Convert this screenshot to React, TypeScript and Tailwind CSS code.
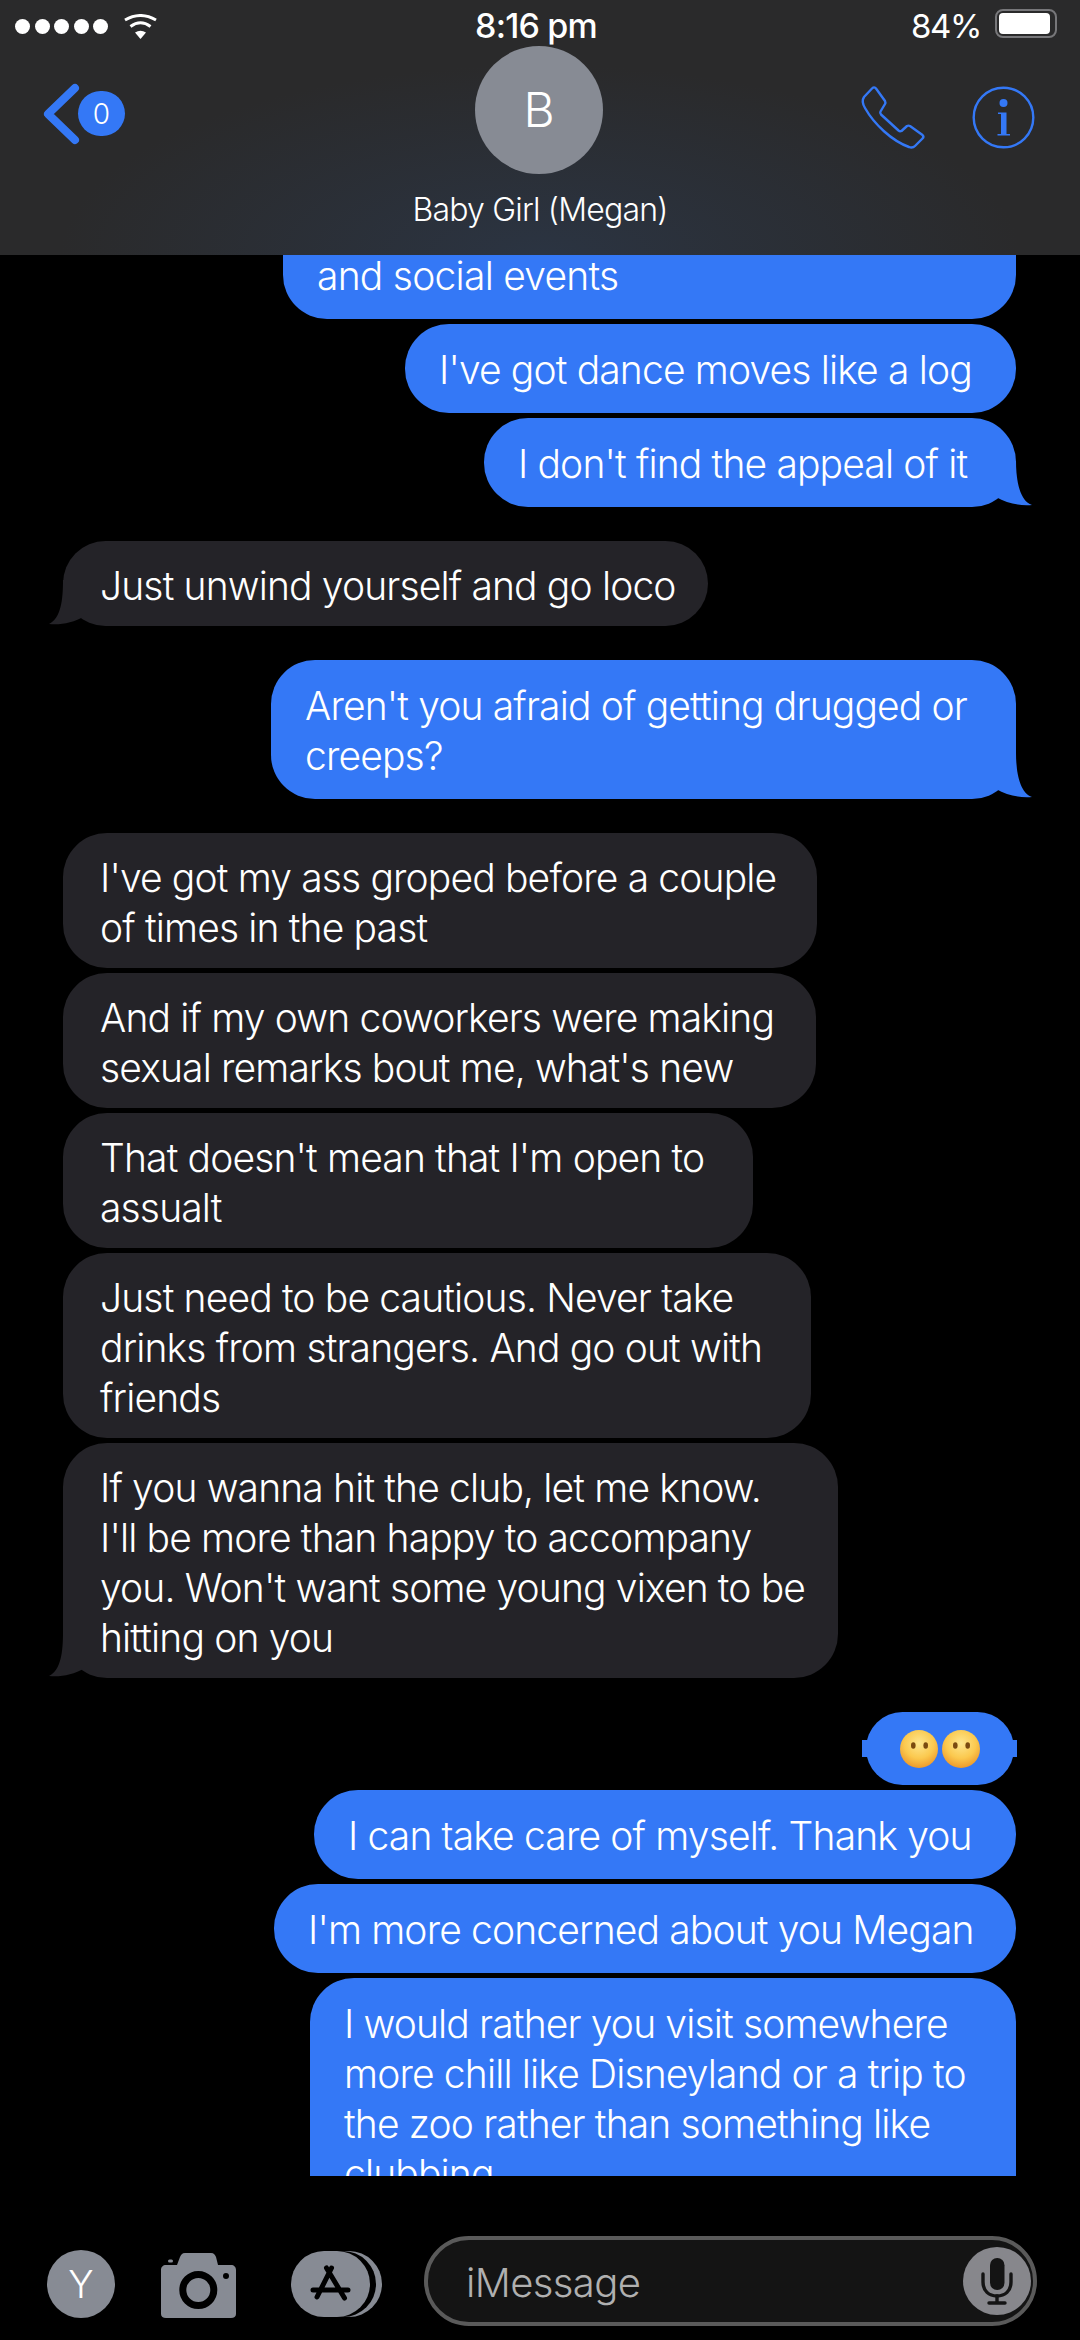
import React from 'react';

const FONT = "font-['Inter','Liberation_Sans',sans-serif]";

type Msg = { lines: string[]; mine: boolean; tail?: boolean; mt: number; w: number };

const messages: Msg[] = [
  { lines: ["I've got dance moves like a log"], mine: true, mt: 5, w: 611 },
  { lines: ["I don't find the appeal of it"], mine: true, tail: true, mt: 5, w: 532 },
  { lines: ['Just unwind yourself and go loco'], mine: false, tail: true, mt: 34, w: 645 },
  { lines: ["Aren't you afraid of getting drugged or", 'creeps?'], mine: true, tail: true, mt: 34, w: 745 },
  { lines: ["I've got my ass groped before a couple", 'of times in the past'], mine: false, mt: 34, w: 754 },
  { lines: ['And if my own coworkers were making', "sexual remarks bout me, what's new"], mine: false, mt: 5, w: 753 },
  { lines: ["That doesn't mean that I'm open to", 'assualt'], mine: false, mt: 5, w: 690 },
  { lines: ['Just need to be cautious. Never take', 'drinks from strangers. And go out with', 'friends'], mine: false, mt: 5, w: 748 },
  {
    lines: ['If you wanna hit the club, let me know.', "I'll be more than happy to accompany", "you. Won't want some young vixen to be", 'hitting on you'],
    mine: false,
    tail: true,
    mt: 5,
    w: 775,
  },
];

const Tail = ({ mine }: { mine: boolean }) =>
  mine ? (
    <svg className="absolute right-[-16px] bottom-0" width="36" height="46" viewBox="0 0 36 46">
      <path d="M0 0 H20 C20 20 24 40 36 44 C26 45 12 43 0 36 Z" fill="#3478f6" />
    </svg>
  ) : (
    <svg className="absolute left-[-14px] bottom-0" width="36" height="46" viewBox="0 0 36 46">
      <path d="M36 0 H14 C14 20 12 38 0 44 C12 45 24 43 36 36 Z" fill="#242328" />
    </svg>
  );

const Bubble = ({ lines, mine, tail, mt, w }: Msg) => (
  <div className={`flex ${mine ? 'justify-end pr-[64px]' : 'justify-start pl-[63px]'}`} style={{ marginTop: mt }}>
    <div
      className={`relative rounded-[44px] text-white text-[39px] leading-[50px] tracking-[-0.85px] font-[350] ${
        mine ? 'bg-[#3478f6] pl-[34px] pt-[21px] pb-[18px]' : 'bg-[#242328] pl-[37px] pt-[20px] pb-[15px]'
      }`}
      style={{ width: w }}
    >
      {tail && <Tail mine={mine} />}
      {lines.map((l) => (
        <span key={l} className="relative block whitespace-nowrap">
          {l}
        </span>
      ))}
    </div>
  </div>
);

const Face = () => (
  <svg width="38" height="38" viewBox="0 0 38 38">
    <defs>
      <radialGradient id="face" cx="50%" cy="35%" r="65%">
        <stop offset="0%" stopColor="#fde68f" />
        <stop offset="60%" stopColor="#fbc94f" />
        <stop offset="100%" stopColor="#ee9a2c" />
      </radialGradient>
    </defs>
    <circle cx="19" cy="19" r="19" fill="url(#face)" />
    <ellipse cx="13.3" cy="15.5" rx="2.3" ry="3.2" fill="#7a4a10" />
    <ellipse cx="25.7" cy="15.5" rx="2.3" ry="3.2" fill="#7a4a10" />
  </svg>
);

export default function App() {
  return (
    <div className={`w-[1080px] h-[2340px] bg-black flex flex-col overflow-hidden ${FONT}`}>
      {/* nav bar */}
      <div className="h-[255px] shrink-0 relative bg-[#2a2a2b] bg-[radial-gradient(ellipse_480px_190px_at_50%_100%,#2b3442,#2a2a2b)]">
        <div className="h-[52px] flex items-center justify-between pl-[15px] pr-[23px] text-white">
          <div className="flex items-center gap-[4.6px] w-[300px]">
            {[0, 1, 2, 3, 4].map((i) => (
              <span key={i} className="w-[15px] h-[15px] rounded-full bg-white" />
            ))}
            <svg className="ml-[11px]" width="33" height="25" viewBox="0 0 33 25">
              <path d="M16.5 25 L11 18.5 Q16.5 15 22 18.5 Z" fill="#fff" />
              <path d="M6.5 12.5 Q16.5 5 26.5 12.5" stroke="#fff" strokeWidth="3" fill="none" />
              <path d="M1 6 Q16.5 -3 32 6" stroke="#fff" strokeWidth="3" fill="none" />
            </svg>
          </div>
          <span className="text-[34px] tracking-[-0.8px] font-medium leading-none">8:16 pm</span>
          <div className="w-[300px] flex items-center justify-end gap-[14px]">
            <span className="text-[33px] tracking-[-1.4px] leading-none">84%</span>
            <div className="w-[62px] h-[29px] -mt-[6px] rounded-[8px] border-2 border-[#77777a] p-[2px] pr-[5px]">
              <div className="w-full h-full rounded-[4px] bg-white" />
            </div>
          </div>
        </div>

        <div className="absolute left-[475px] top-[46px] w-[128px] h-[128px] rounded-full bg-[#878b94] flex items-center justify-center text-white text-[48px] font-[350]">
          B
        </div>
        <div className="absolute left-0 right-0 top-[190px] text-center text-white text-[32px] leading-[40px] tracking-[-0.8px] font-[350]">
          Baby Girl (Megan)
        </div>

        <svg className="absolute left-[41px] top-[83px]" width="40" height="62" viewBox="0 0 40 62" fill="none">
          <path d="M34 5 L7 31 L34 57" stroke="#3478f6" strokeWidth="8" strokeLinecap="round" strokeLinejoin="round" />
        </svg>
        <div className="absolute left-[78px] top-[91px] w-[47px] h-[45px] rounded-full bg-[#3478f6] flex items-center justify-center text-white text-[28px] font-[350]">
          0
        </div>

        <svg className="absolute left-[840px] top-[70px]" width="100" height="100" viewBox="0 0 100 100" fill="none">
          <path
            d="M32 18.5 C33.5 17 35 17 36 18.5 L45 31 C45.5 32 45.5 33 45 34 L40.5 41.5 C40 42.5 40 43.5 41 44.5 L58.5 60.5 C59.5 61.5 60.5 61.5 61.5 61 L67 56 C68 55.5 69 55.5 70 56 L82.5 65 C83.5 66 83.5 67.5 82.5 68.5 L75 76 C73.5 77.5 71.5 78 69 77 C52 71 34 54 25 38 C22 33 22 30 24 27 Z"
            stroke="#3478f6"
            strokeWidth="2.4"
            strokeLinejoin="round"
          />
        </svg>
        <svg className="absolute left-[972px] top-[86px]" width="64" height="64" viewBox="0 0 64 64" fill="none">
          <circle cx="31.5" cy="31.5" r="29.8" stroke="#3478f6" strokeWidth="2.4" />
          <circle cx="31.5" cy="17" r="4" fill="#3478f6" />
          <path d="M26 26.5 H34.5 V48 H38 V49.5 H25.5 V48 H29 V28 H26 Z" fill="#3478f6" />
        </svg>
      </div>

      {/* conversation */}
      <div className="h-[1921px] shrink-0 overflow-hidden">
        <div className="flex justify-end pr-[64px]">
          <div className="w-[733px] h-[64px] bg-[#3478f6] rounded-b-[44px] pl-[34px] text-white text-[39px] leading-[42px] tracking-[-0.75px] font-[350]">
            and social events
          </div>
        </div>

        {messages.map((m) => (
          <Bubble key={m.lines[0]} {...m} />
        ))}

        <div className="flex justify-end pr-[66px] mt-[34px]">
          <div className="relative w-[148px] h-[73px] rounded-full bg-[#3478f6] flex items-center justify-center">
            <span className="absolute left-[-4px] right-[-3px] top-[28px] h-[17px] bg-[#3478f6]" />
            <span className="relative flex gap-[4px]">
              <Face />
              <Face />
            </span>
          </div>
        </div>

        <Bubble lines={['I can take care of myself. Thank you']} mine mt={5} w={702} />
        <Bubble lines={["I'm more concerned about you Megan"]} mine mt={5} w={742} />
        <div className="flex justify-end pr-[64px] mt-[5px]">
          <div className="w-[706px] h-[300px] bg-[#3478f6] rounded-t-[44px] pl-[34px] pt-[21px] text-white text-[39px] leading-[50px] tracking-[-0.85px] font-[350]">
            <span className="block whitespace-nowrap">I would rather you visit somewhere</span>
            <span className="block whitespace-nowrap">more chill like Disneyland or a trip to</span>
            <span className="block whitespace-nowrap">the zoo rather than something like</span>
            <span className="block whitespace-nowrap">clubbing</span>
          </div>
        </div>
      </div>

      {/* input bar */}
      <div className="flex-1 relative flex items-start pl-[47px] pt-[74px]">
        <div className="w-[68px] h-[68px] rounded-full bg-[#878b94] flex items-center justify-center text-white text-[38px] font-light">
          Y
        </div>
        <svg className="ml-[46px] mt-[3px]" width="75" height="65" viewBox="0 0 75 65">
          <path
            fill="#878b94"
            d="M24 0 H50 C53 0 54 2 55 4 L57 12 H70 C73 12 75 14 75 17 V61 C75 63.5 73 65 70 65 H5 C2 65 0 63.5 0 61 V17 C0 14 2 12 5 12 H16 L19 4 C20 2 21 0 24 0 Z"
          />
          <circle cx="37.3" cy="37" r="15.5" fill="none" stroke="#000" strokeWidth="7" />
          <circle cx="65" cy="23" r="3" fill="#000" />
          <rect x="7" y="6.5" width="5" height="3" rx="1.5" fill="#878b94" />
        </svg>
        <svg className="ml-[55px] mt-[1px]" width="91" height="66" viewBox="0 0 91 66">
          <rect x="20" width="71" height="66" rx="33" fill="#878b94" />
          <rect x="15" width="70" height="66" rx="33" fill="#000" />
          <rect width="79" height="66" rx="33" fill="#878b94" />
          <path d="M35.5 17 L53.5 47 M40.5 17 L26 46 M22 39 H57" stroke="#000" strokeWidth="5" strokeLinecap="round" fill="none" />
        </svg>
        <div className="absolute left-[424px] top-[60px] w-[613px] h-[90px] rounded-[45px] border-[4px] border-[#5a5a5a] bg-[#141414] flex items-center pl-[38px] pt-[3px] text-[40px] text-[#b0b0b0] tracking-[-0.6px] font-[350]">
          iMessage
          <div className="absolute right-[2px] top-[7px] w-[68px] h-[68px] rounded-full bg-[#87878c]">
            <svg width="68" height="68" viewBox="0 0 68 68" fill="none">
              <rect x="27" y="11" width="14.5" height="32" rx="7.2" fill="#141414" />
              <path d="M20 27 V35 C20 44 26 49 34 49 C42 49 48 44 48 35 V27" stroke="#141414" strokeWidth="3.4" strokeLinecap="round" />
              <path d="M34 49 V56 M26 56 H42" stroke="#141414" strokeWidth="3.4" strokeLinecap="round" />
            </svg>
          </div>
        </div>
      </div>
    </div>
  );
}
